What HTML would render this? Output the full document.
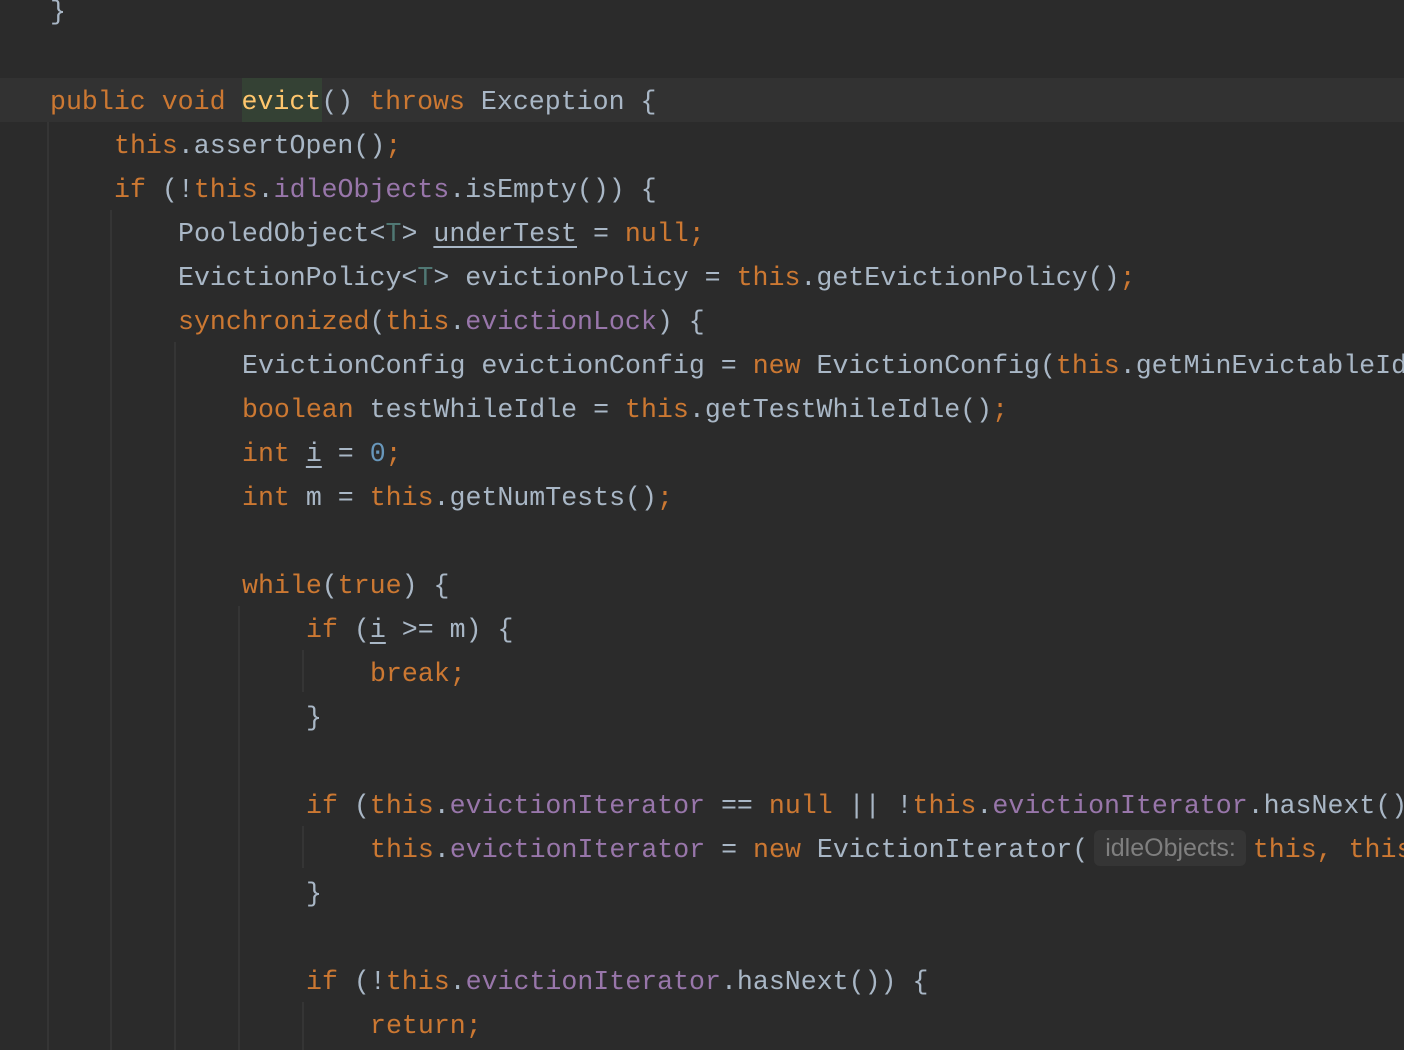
<!DOCTYPE html>
<html><head><meta charset="utf-8"><style>
html,body{margin:0;padding:0;background:#2b2b2b;width:1404px;height:1050px;overflow:hidden;position:relative}
.l{position:absolute;height:44px;line-height:44px;white-space:pre;font-family:"Liberation Mono",monospace;font-size:26.6px;color:#a9b7c6;max-width:1404px;overflow:hidden}
.k{color:#cc7832}.f{color:#9876aa}.m{color:#ffc66d}.n{color:#6897bb}.t{color:#507874}
.u{text-decoration:underline;text-underline-offset:5px}
.g{position:absolute;width:2px;background:#353535}
.hint{display:inline-block;background:#353535;color:#7f7f7f;font-family:"Liberation Sans",sans-serif;font-size:25px;line-height:36px;height:36px;padding:0 10px 0 11px;border-radius:6px;vertical-align:middle;margin:0 7px 0 6px;position:relative;top:-2px}
</style></head><body>
<div style="position:absolute;left:0;top:78px;width:1404px;height:44px;background:#323232"></div>
<div style="position:absolute;left:242px;top:78px;width:80px;height:44px;background:#344134"></div>
<div class="g" style="left:47px;top:122px;height:928px"></div>
<div class="g" style="left:110px;top:210px;height:840px"></div>
<div class="g" style="left:174px;top:342px;height:708px"></div>
<div class="g" style="left:238px;top:606px;height:444px"></div>
<div class="g" style="left:302px;top:650px;height:42px"></div>
<div class="g" style="left:302px;top:826px;height:42px"></div>
<div class="g" style="left:302px;top:1002px;height:48px"></div>

<div class="l" style="left:50px;top:-10px">}</div>
<div class="l" style="left:50px;top:80px"><span class="k">public void </span><span class="m">evict</span>() <span class="k">throws </span>Exception {</div>
<div class="l" style="left:114px;top:124px"><span class="k">this</span>.assertOpen()<span class="k">;</span></div>
<div class="l" style="left:114px;top:168px"><span class="k">if </span>(!<span class="k">this</span>.<span class="f">idleObjects</span>.isEmpty()) {</div>
<div class="l" style="left:178px;top:212px">PooledObject&lt;<span class="t">T</span>&gt; <span class="u">underTest</span> = <span class="k">null;</span></div>
<div class="l" style="left:178px;top:256px">EvictionPolicy&lt;<span class="t">T</span>&gt; evictionPolicy = <span class="k">this</span>.getEvictionPolicy()<span class="k">;</span></div>
<div class="l" style="left:178px;top:300px"><span class="k">synchronized</span>(<span class="k">this</span>.<span class="f">evictionLock</span>) {</div>
<div class="l" style="left:242px;top:344px">EvictionConfig evictionConfig = <span class="k">new </span>EvictionConfig(<span class="k">this</span>.getMinEvictableIdleTime()</div>
<div class="l" style="left:242px;top:388px"><span class="k">boolean </span>testWhileIdle = <span class="k">this</span>.getTestWhileIdle()<span class="k">;</span></div>
<div class="l" style="left:242px;top:432px"><span class="k">int </span><span class="u">i</span> = <span class="n">0</span><span class="k">;</span></div>
<div class="l" style="left:242px;top:476px"><span class="k">int </span>m = <span class="k">this</span>.getNumTests()<span class="k">;</span></div>
<div class="l" style="left:242px;top:564px"><span class="k">while</span>(<span class="k">true</span>) {</div>
<div class="l" style="left:306px;top:608px"><span class="k">if </span>(<span class="u">i</span> &gt;= m) {</div>
<div class="l" style="left:370px;top:652px"><span class="k">break;</span></div>
<div class="l" style="left:306px;top:696px">}</div>
<div class="l" style="left:306px;top:784px"><span class="k">if </span>(<span class="k">this</span>.<span class="f">evictionIterator</span> == <span class="k">null </span>|| !<span class="k">this</span>.<span class="f">evictionIterator</span>.hasNext()) {</div>
<div class="l" style="left:370px;top:828px"><span class="k">this</span>.<span class="f">evictionIterator</span> = <span class="k">new </span>EvictionIterator(<span class="hint">idleObjects:</span><span class="k">this, this</span></div>
<div class="l" style="left:306px;top:872px">}</div>
<div class="l" style="left:306px;top:960px"><span class="k">if </span>(!<span class="k">this</span>.<span class="f">evictionIterator</span>.hasNext()) {</div>
<div class="l" style="left:370px;top:1004px"><span class="k">return;</span></div>
</body></html>
